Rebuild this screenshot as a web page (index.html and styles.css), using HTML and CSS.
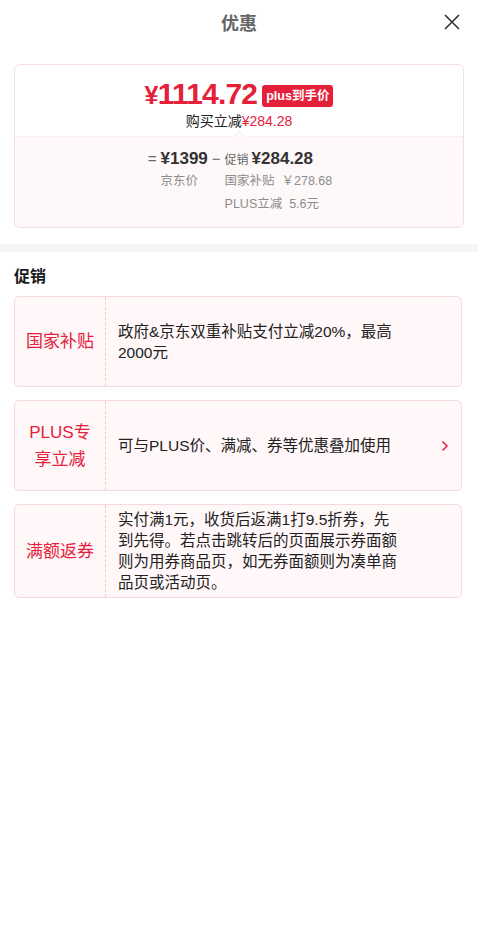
FILE: index.html
```html
<!DOCTYPE html>
<html lang="zh-CN">
	<head>
		<meta charset="UTF-8" />
		<meta name="viewport" content="width=device-width, initial-scale=1.0" />
		<title>优惠</title>
		<link rel="stylesheet" href="styles.css">
	</head>
	<body>
		<div id="app">
			<header class="top">
				<h1>优惠</h1>
				<span class="close">
					<svg width="16" height="16" viewBox="0 0 16 16"><path d="M1 1L15 15M15 1L1 15" stroke="#333" stroke-width="1.6" fill="none"/></svg>
				</span>
			</header>

			<section class="price-card">
				<div class="price-top">
					<div class="final">
						<span class="final-num"><small>¥</small>1114.72</span>
						<span class="badge">plus到手价</span>
					</div>
					<div class="save">购买立减<em>¥284.28</em></div>
				</div>
				<div class="price-bottom">
					<i class="notch"></i>
					<div class="calc">
						<span class="op">=</span>
						<div class="col">
							<b>¥1399</b>
							<span class="sub">京东价</span>
						</div>
						<span class="op">−</span>
						<div class="col">
							<span><span class="tag">促销</span><b>¥284.28</b></span>
							<span class="sub">国家补贴&nbsp;&nbsp;￥278.68</span>
							<span class="sub">PLUS立减&nbsp;&nbsp;5.6元</span>
						</div>
					</div>
				</div>
			</section>

			<div class="band"></div>

			<section class="promos">
				<h2>促销</h2>
				<div class="promo">
					<div class="promo-label">国家补贴</div>
					<div class="promo-text">政府&amp;京东双重补贴支付立减20%，最高2000元</div>
				</div>
				<div class="promo">
					<div class="promo-label">PLUS专享立减</div>
					<div class="promo-text">可与PLUS价、满减、券等优惠叠加使用</div>
					<span class="arrow">
						<svg width="8" height="12" viewBox="0 0 8 12"><path d="M1.5 1.5L6 6L1.5 10.5" stroke="#e5203a" stroke-width="1.5" fill="none"/></svg>
					</span>
				</div>
				<div class="promo">
					<div class="promo-label">满额返券</div>
					<div class="promo-text">实付满1元，收货后返满1打9.5折券，先到先得。若点击跳转后的页面展示券面额则为用券商品页，如无券面额则为凑单商品页或活动页。</div>
				</div>
			</section>
		</div>
	</body>
</html>
```

FILE: styles.css
```css
html {
	background: #fff;
	color: #1a1a1a;
	font-family: "Liberation Sans", "Noto Sans CJK SC", sans-serif;
}
body {
	margin: 0;
}
.top {
	position: relative;
	height: 44px;
	display: flex;
	align-items: center;
	justify-content: center;
}
.top h1 {
	margin: 0;
	font-size: 18px;
	font-weight: bold;
	color: #666;
}
.close {
	position: absolute;
	right: 18px;
	top: 14px;
}
.price-card {
	margin: 20px 14px 0;
	border: 1px solid #f6dde2;
	border-radius: 6px;
	overflow: hidden;
}
.price-top {
	padding: 13px 0 5px;
	text-align: center;
}
.final {
	display: flex;
	justify-content: center;
	align-items: center;
	gap: 5px;
}
.final-num {
	color: #e5203a;
	font-size: 30px;
	font-weight: bold;
	line-height: 32px;
	letter-spacing: -0.8px;
}
.final-num small {
	font-size: 25px;
}
.badge {
	background: #e5203a;
	color: #fff;
	font-size: 12.5px;
	font-weight: bold;
	padding: 3px 4px;
	border-radius: 3px;
	line-height: 16px;
	margin-top: 2px;
}
.save {
	font-size: 14px;
	line-height: 20px;
	color: #222;
}
.save em {
	font-style: normal;
	color: #e5203a;
}
.price-bottom {
	position: relative;
	background: #fff8f9;
	border-top: 1px solid #fbeef0;
	padding: 10px 0 11px;
}
.notch {
	position: absolute;
	left: 50%;
	top: -5px;
	width: 8px;
	height: 8px;
	margin-left: -4px;
	background: #fff8f9;
	border-left: 1px solid #fbeef0;
	border-top: 1px solid #fbeef0;
	transform: rotate(45deg);
}
.calc {
	display: flex;
	justify-content: center;
	gap: 4px;
	padding-left: 2px;
}
.op {
	font-size: 15px;
	color: #666;
	line-height: 23px;
}
.col {
	display: flex;
	flex-direction: column;
}
.col b {
	font-size: 17px;
	color: #333;
	line-height: 23px;
}
.tag {
	font-size: 12px;
	color: #666;
	margin-right: 3px;
}
.sub {
	font-size: 12.5px;
	color: #8c8c8c;
	line-height: 23px;
}
.band {
	height: 8px;
	background: #f5f6fa;
	margin-top: 16px;
}
.promos {
	padding: 0 16px 0 14px;
}
.promos h2 {
	margin: 14px 0 8px;
	font-size: 16px;
	font-weight: bold;
	line-height: 22px;
}
.promo {
	position: relative;
	display: flex;
	min-height: 89px;
	margin-bottom: 13px;
	background: #fff7f8;
	border: 1px solid #f5d9df;
	border-radius: 5px;
}
.promo-label {
	width: 70px;
	flex: none;
	padding: 0 10px;
	display: flex;
	align-items: center;
	justify-content: center;
	text-align: center;
	color: #e5203a;
	font-size: 17px;
	line-height: 27px;
	border-right: 1px dashed #f1c8d0;
}
.promo-text {
	align-self: center;
	width: 282px;
	padding: 4px 0 4px 12px;
	font-size: 15.5px;
	line-height: 21px;
	color: #222;
}
.arrow {
	position: absolute;
	right: 12px;
	top: 50%;
	margin-top: -6px;
	display: flex;
}
```
